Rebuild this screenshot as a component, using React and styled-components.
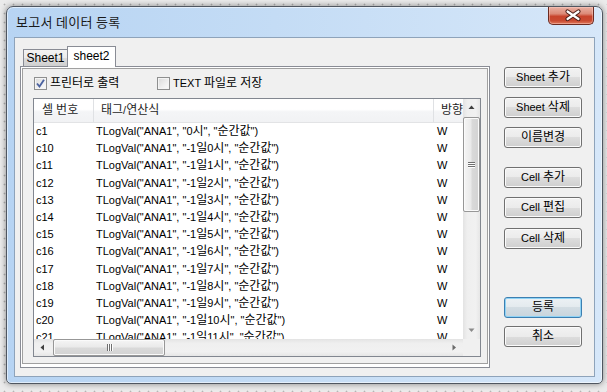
import React from "react";
import styled, { createGlobalStyle } from "styled-components";

const GlobalStyle = createGlobalStyle`
  html, body { margin: 0; padding: 0; }
  body {
    width: 607px;
    height: 392px;
    overflow: hidden;
    background-color: #ebebeb;
    background-image: radial-gradient(circle, #b4b4b4 0.8px, transparent 1.1px);
    background-size: 9px 9px;
    font-family: "Liberation Sans", "Noto Sans CJK KR", sans-serif;
    font-size: 11px;
    color: #000;
  }
`;

const rows = [
  ["c1", '"0시"'],
  ["c10", '"-1일0시"'],
  ["c11", '"-1일1시"'],
  ["c12", '"-1일2시"'],
  ["c13", '"-1일3시"'],
  ["c14", '"-1일4시"'],
  ["c15", '"-1일5시"'],
  ["c16", '"-1일6시"'],
  ["c17", '"-1일7시"'],
  ["c18", '"-1일8시"'],
  ["c19", '"-1일9시"'],
  ["c20", '"-1일10시"'],
  ["c21", '"-1일11시"'],
];

// Korean runs are drawn a size up, as the Windows dialog font does
const Txt = ({ children }) =>
  String(children)
    .split(/([\uAC00-\uD7A3]+)/)
    .map((part, i) => (/[\uAC00-\uD7A3]/.test(part) ? <Hangul key={i}>{part}</Hangul> : part));

const Arrow = ({ dir, color }) => {
  const pts = {
    up: "0.5,4 3.5,0.5 6.5,4",
    down: "0.5,0.5 3.5,4 6.5,0.5",
    left: "4,0.5 0.5,3.5 4,6.5",
    right: "0.5,0.5 4,3.5 0.5,6.5",
  }[dir];
  const vertical = dir === "up" || dir === "down";
  return (
    <svg width={vertical ? 7 : 5} height={vertical ? 5 : 7}>
      <polygon points={pts} fill={color} />
    </svg>
  );
};

const App = () => {
  return (
    <>
      <GlobalStyle />
      <Page>
        <Window>
          <TitleBar>
            <Title>보고서 데이터 등록</Title>
            <CloseButton>
              <svg width="46" height="17">
                <path d="M18.5 4.5 L29.5 12 M29.5 4.5 L18.5 12" stroke="#4a1d16" strokeWidth="4.2" strokeLinecap="round" />
                <path d="M18.5 4.5 L29.5 12 M29.5 4.5 L18.5 12" stroke="#ffffff" strokeWidth="2.2" strokeLinecap="round" />
              </svg>
            </CloseButton>
          </TitleBar>
          <Client>
            <TabControl>
              <TabStrip>
                <Tab $w={45}>Sheet1</Tab>
                <Tab $w={49} $active>sheet2</Tab>
              </TabStrip>
              <Panel>
                <Pane>
                  <CheckRow>
                    <CheckItem $w={123}>
                      <CheckBox>
                        <svg width="11" height="11">
                          <path d="M2 5.5 L4.5 8.5 L9 1.8" stroke="#4b62a0" strokeWidth="1.9" fill="none" />
                        </svg>
                      </CheckBox>
                      <Label><Txt>프린터로 출력</Txt></Label>
                    </CheckItem>
                    <CheckItem>
                      <CheckBox />
                      <Label><Txt>TEXT 파일로 저장</Txt></Label>
                    </CheckItem>
                  </CheckRow>
                  <ListView>
                    <ListContent>
                      <HeaderRow>
                        <HeaderCell $w={60} $pl={8}><Txt>셀 번호</Txt></HeaderCell>
                        <HeaderCell $w={340} $pl={7}><Txt>태그/연산식</Txt></HeaderCell>
                        <HeaderCell $w={60} $pl={7}><Txt>방향</Txt></HeaderCell>
                      </HeaderRow>
                      {rows.map(([id, hour]) => (
                        <Row key={id}>
                          <Cell $w={60} $pl={2}>{id}</Cell>
                          <Cell $w={340} $pl={2}>
                            <Txt>{`TLogVal("ANA1", ${hour}, "순간값")`}</Txt>
                          </Cell>
                          <Cell $w={40} $pl={3}>W</Cell>
                        </Row>
                      ))}
                    </ListContent>
                    <VScroll>
                      <ScrollButton>
                        <Arrow dir="up" color="#404040" />
                      </ScrollButton>
                      <VThumb>
                        <GripV>
                          <span />
                          <span />
                          <span />
                        </GripV>
                      </VThumb>
                      <Spacer />
                      <ScrollButton>
                        <Arrow dir="down" color="#8a8a8a" />
                      </ScrollButton>
                    </VScroll>
                    <HScroll>
                      <ScrollButton>
                        <Arrow dir="left" color="#404040" />
                      </ScrollButton>
                      <HThumb>
                        <GripH>
                          <span />
                          <span />
                          <span />
                        </GripH>
                      </HThumb>
                      <Spacer />
                      <ScrollButton>
                        <Arrow dir="right" color="#6a6a6a" />
                      </ScrollButton>
                    </HScroll>
                    <Corner />
                  </ListView>
                </Pane>
              </Panel>
            </TabControl>
            <ButtonColumn>
              <Button $mt={0}><Txt>Sheet 추가</Txt></Button>
              <Button $mt={9}><Txt>Sheet 삭제</Txt></Button>
              <Button $mt={9}><Txt>이름변경</Txt></Button>
              <Button $mt={19}><Txt>Cell 추가</Txt></Button>
              <Button $mt={9}><Txt>Cell 편집</Txt></Button>
              <Button $mt={10}><Txt>Cell 삭제</Txt></Button>
              <Button $mt={48} $default><Txt>등록</Txt></Button>
              <Button $mt={8}><Txt>취소</Txt></Button>
            </ButtonColumn>
          </Client>
        </Window>
      </Page>
    </>
  );
};

export default App;

const Hangul = styled.span`
  font-family: "Noto Sans CJK KR", sans-serif;
  font-size: 12px;
  line-height: 1;
`;

const Page = styled.div`
  padding: 6px 0 0 6px;
`;

const Window = styled.div`
  width: 597px;
  height: 378px;
  box-sizing: border-box;
  border: 1px solid #4f5660;
  border-radius: 7px 7px 5px 5px;
  background: linear-gradient(to right, #b7d4f3 0%, #c4dcf5 45%, #d6e7f9 100%);
  box-shadow: 0 0 6px rgba(0, 0, 0, 0.45), inset 0 0 0 1px rgba(255, 255, 255, 0.55);
  display: flex;
  flex-direction: column;
`;

const TitleBar = styled.div`
  height: 30px;
  display: flex;
  justify-content: space-between;
  align-items: flex-start;
  padding-left: 9px;
`;

const Title = styled.div`
  line-height: 30px;
  font-family: "Noto Sans CJK KR", sans-serif;
  font-size: 13px;
  letter-spacing: 0.3px;
  color: #1a1a1a;
`;

const CloseButton = styled.div`
  width: 46px;
  height: 18px;
  margin-right: 8px;
  box-sizing: border-box;
  border: 1px solid #6b2a20;
  border-top: none;
  border-radius: 0 0 5px 5px;
  background: linear-gradient(#eab1a3 0%, #dc8a77 40%, #c8442c 55%, #c94a31 80%, #e0795c 100%);
  box-shadow: inset 0 0 0 1px rgba(255, 210, 200, 0.45);
  display: flex;
`;

const Client = styled.div`
  flex: 1;
  margin: 0 7px 6px 7px;
  border: 1px solid #8ea3ba;
  background: #f0f0f0;
  display: flex;
  gap: 14px;
  padding: 8px 0 0 5px;
`;

const TabControl = styled.div`
  width: 470px;
  display: flex;
  flex-direction: column;
`;

const TabStrip = styled.div`
  height: 20px;
  display: flex;
  align-items: flex-end;
  padding-left: 3px;
`;

const Tab = styled.div`
  width: ${(p) => p.$w}px;
  height: ${(p) => (p.$active ? 21 : 17)}px;
  box-sizing: border-box;
  margin-left: ${(p) => (p.$active ? -1 : 0)}px;
  margin-bottom: ${(p) => (p.$active ? -1 : 0)}px;
  border: 1px solid #898c95;
  border-bottom: none;
  background: ${(p) =>
    p.$active ? "#ffffff" : "linear-gradient(#f3f3f3 0%, #ebebeb 50%, #dddddd 50%, #cfcfcf 100%)"};
  font-size: 12px;
  text-align: center;
  line-height: ${(p) => (p.$active ? 18 : 16)}px;
  position: relative;
  z-index: ${(p) => (p.$active ? 1 : 0)};
`;

const Panel = styled.div`
  height: 302px;
  box-sizing: border-box;
  border: 1px solid #898c95;
  background: #ffffff;
  padding: 1px 1px 3px 1px;
  display: flex;
`;

const Pane = styled.div`
  flex: 1;
  border: 1px solid #a0a0a0;
  background: #f0f0f0;
  padding: 0 6px 6px 10px;
  display: flex;
  flex-direction: column;
`;

const CheckRow = styled.div`
  height: 29px;
  display: flex;
  align-items: center;
  padding-left: 1px;
`;

const CheckItem = styled.div`
  display: flex;
  align-items: center;
  gap: 3px;
  width: ${(p) => (p.$w ? `${p.$w}px` : "auto")};
`;

const Label = styled.span`
  line-height: 15px;
`;

const CheckBox = styled.div`
  width: 13px;
  height: 13px;
  box-sizing: border-box;
  border: 1px solid #8e8f8f;
  background: linear-gradient(135deg, #d9d9d9 0%, #f0f0f0 60%, #fbfbfb 100%);
  box-shadow: inset 0 0 0 1px #f4f4f4;
  display: flex;
  align-items: center;
  justify-content: center;
`;

const ListView = styled.div`
  flex: 1;
  border: 1px solid #828790;
  background: #ffffff;
  display: grid;
  grid-template-columns: 1fr 17px;
  grid-template-rows: 1fr 17px;
  overflow: hidden;
`;

const ListContent = styled.div`
  overflow: hidden;
`;

const HeaderRow = styled.div`
  height: 24px;
  box-sizing: border-box;
  display: flex;
  border-bottom: 1px solid #e2e3e5;
  background: linear-gradient(#ffffff 0%, #ffffff 45%, #f4f5f7 55%, #f1f2f4 100%);
`;

const HeaderCell = styled.div`
  width: ${(p) => p.$w}px;
  padding-left: ${(p) => p.$pl}px;
  box-sizing: border-box;
  flex-shrink: 0;
  line-height: 23px;
  white-space: nowrap;
  border-right: 1px solid #dfe1e4;
  color: #1e1e1e;
`;

const Row = styled.div`
  height: 17.2px;
  display: flex;
  line-height: 17px;
`;

const Cell = styled.div`
  width: ${(p) => p.$w}px;
  padding-left: ${(p) => p.$pl}px;
  box-sizing: border-box;
  flex-shrink: 0;
  white-space: nowrap;
  overflow: hidden;
`;

const VScroll = styled.div`
  display: flex;
  flex-direction: column;
  background: linear-gradient(to right, #e3e3e3 0%, #efefef 25%, #f1f1f1 75%, #e6e6e6 100%);
`;

const HScroll = styled.div`
  display: flex;
  background: linear-gradient(#e3e3e3 0%, #efefef 25%, #f1f1f1 75%, #e6e6e6 100%);
`;

const Corner = styled.div`
  background: #f0f0f0;
`;

const ScrollButton = styled.div`
  width: 17px;
  height: 17px;
  flex-shrink: 0;
  display: flex;
  align-items: center;
  justify-content: center;
`;

const Spacer = styled.div`
  flex: 1;
`;

const VThumb = styled.div`
  height: 95px;
  margin-top: 1px;
  box-sizing: border-box;
  border: 1px solid #979797;
  border-radius: 2px;
  background: linear-gradient(to right, #f5f5f5 0%, #eaeaea 45%, #d9d9d9 55%, #d3d3d3 100%);
  box-shadow: inset 0 0 0 1px #fafafa;
  display: flex;
  align-items: center;
  justify-content: center;
`;

const HThumb = styled.div`
  width: 112px;
  margin-left: 2px;
  box-sizing: border-box;
  border: 1px solid #979797;
  border-radius: 2px;
  background: linear-gradient(#f5f5f5 0%, #eaeaea 45%, #d9d9d9 55%, #d3d3d3 100%);
  box-shadow: inset 0 0 0 1px #fafafa;
  display: flex;
  align-items: center;
  justify-content: center;
`;

const GripV = styled.div`
  display: flex;
  flex-direction: column;
  gap: 1px;
  span {
    display: block;
    width: 7px;
    height: 1px;
    background: #6f6f6f;
    box-shadow: 0 1px 0 #fdfdfd;
  }
`;

const GripH = styled.div`
  display: flex;
  gap: 1px;
  span {
    display: block;
    width: 1px;
    height: 7px;
    background: #6f6f6f;
    box-shadow: 1px 0 0 #fdfdfd;
  }
`;

const ButtonColumn = styled.div`
  display: flex;
  flex-direction: column;
  margin-top: 21px;
  width: 78px;
`;

const Button = styled.button`
  height: 21px;
  width: 78px;
  margin-top: ${(p) => p.$mt}px;
  padding: 0;
  box-sizing: border-box;
  border: 1px solid ${(p) => (p.$default ? "#3c7fb1" : "#707070")};
  border-radius: 3px;
  background: ${(p) =>
    p.$default
      ? "linear-gradient(#ecf1f4 0%, #e3eaee 50%, #d3dde3 50%, #c8d5dd 100%)"
      : "linear-gradient(#f2f2f2 0%, #ebebeb 50%, #dddddd 50%, #cfcfcf 100%)"};
  box-shadow: inset 0 0 0 1px ${(p) => (p.$default ? "#8fd3f5" : "#fbfbfb")};
  font-family: "Liberation Sans", "Noto Sans CJK KR", sans-serif;
  font-size: 11px;
  font-weight: 400;
  color: #000;
  line-height: 19px;
`;
